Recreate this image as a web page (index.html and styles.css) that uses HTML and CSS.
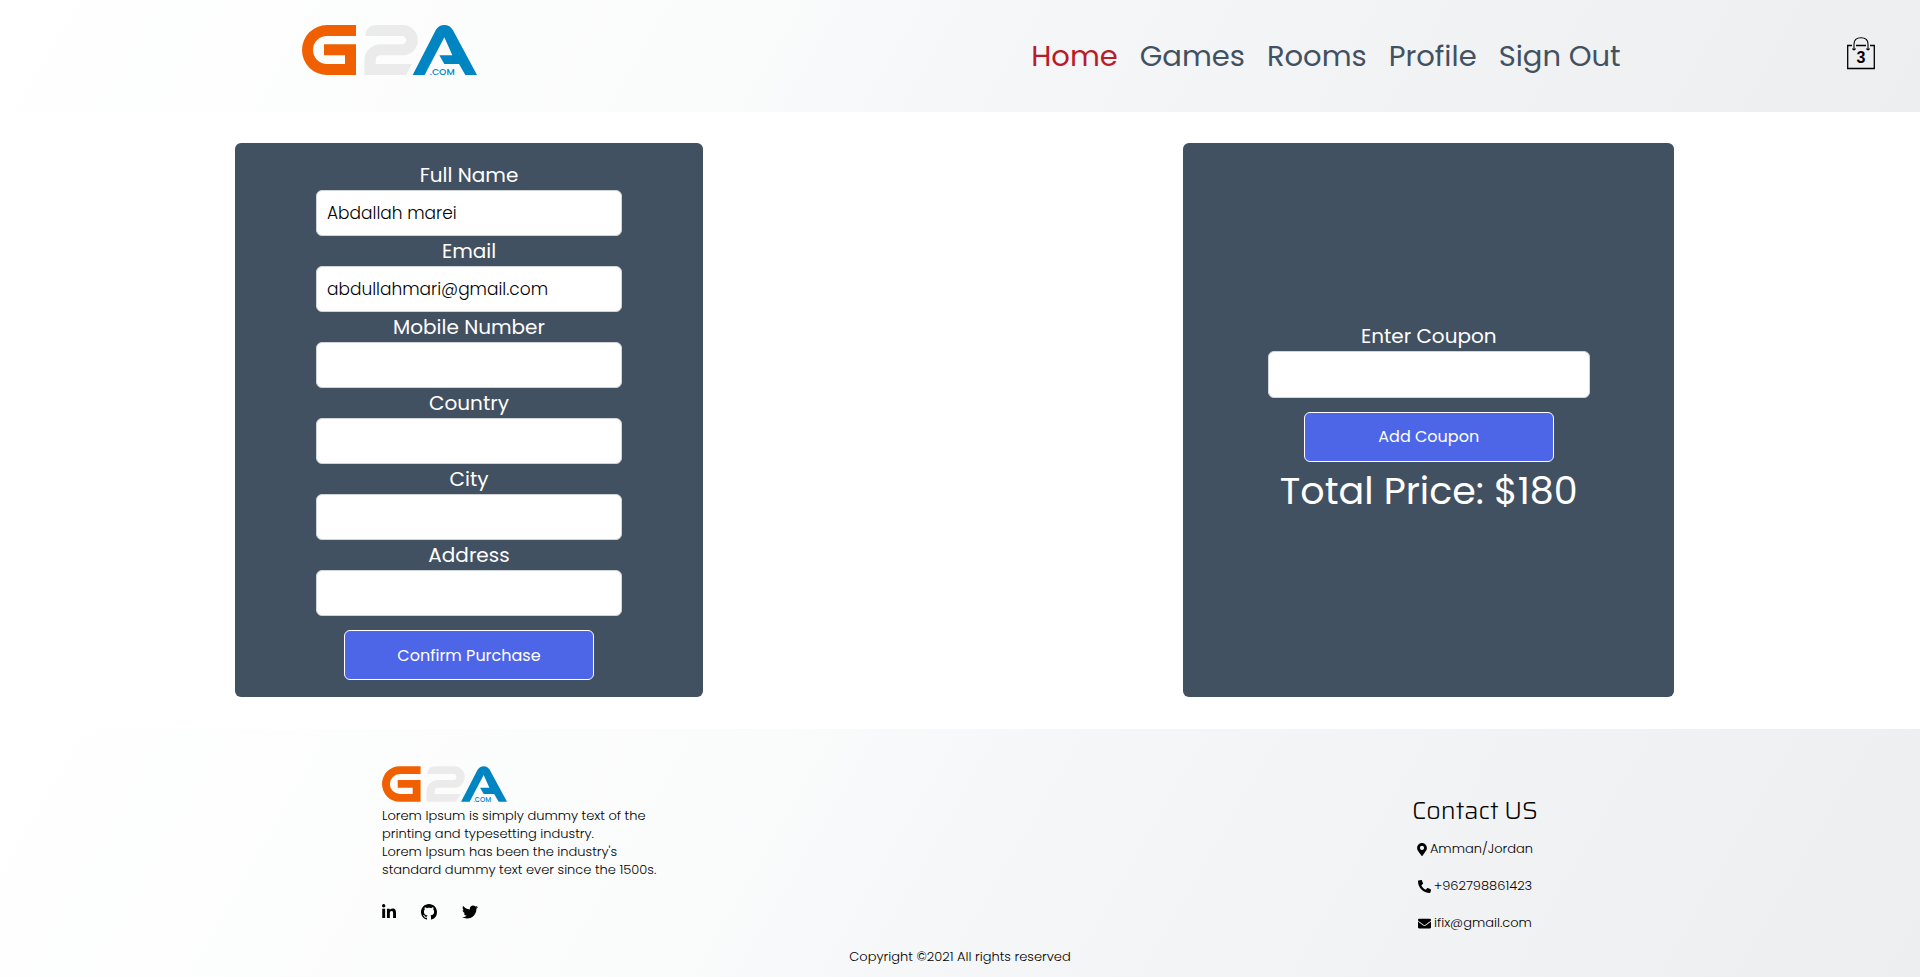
FILE: index.html
```html
<!DOCTYPE html>
<html lang="en">
<head>
<meta charset="utf-8">
<title>G2A Checkout</title>
<link rel="stylesheet" href="styles.css">
</head>
<body>
<header class="header">
  <a href="#" class="brand" aria-label="G2A.com">
    <svg class="logo" viewBox="0 0 525 150">
      <g id="logo">
        <path fill="#f16000" d="M162 0H75A75 75 0 0 0 75 150H162V58H66V91H129V117H75A42 42 0 0 1 75 33H162Z"/>
        <path fill="#ebebeb" d="M190 33Q192 0 225 0H302A45 45 0 0 1 302 91H236Q221 91 221 106V117H330L312 150H187V107A49 49 0 0 1 236 58H300A12 12 0 0 0 300 33Z"/>
        <path fill="#0085c3" d="M332 150L401 16Q410 0 427 0Q444 0 453 16L525 150H490L471 117H427L412 91H451L427 37L368 150Z"/>
        <text x="383" y="149" class="logo-text">.COM</text>
      </g>
    </svg>
  </a>
  <nav class="nav">
    <a href="#" class="active">Home</a>
    <a href="#">Games</a>
    <a href="#">Rooms</a>
    <a href="#">Profile</a>
    <a href="#">Sign Out</a>
  </nav>
  <a href="#" class="cart" aria-label="Cart">
    <svg viewBox="0 0 28 33" fill="none" stroke="#000">
      <path stroke-width="1.3" d="M5 8.500H.7V31.500H27.300V8.500H23M9 8.500H19"/>
      <path stroke-width="1.100" d="M7 12V7Q7 .8 14 .8T21 7V12"/>
      <path stroke-width="1.300" d="M5.500 11.500Q7 14 8.500 11.500M19.500 11.500Q21 14 22.500 11.500"/>
    </svg>
    <span class="count">3</span>
  </a>
</header>
<main class="main">
  <form class="card purchase">
    <label for="name">Full Name</label>
    <input id="name" type="text" value="Abdallah marei">
    <label for="email">Email</label>
    <input id="email" type="email" value="abdullahmari@gmail.com">
    <label for="mobile">Mobile Number</label>
    <input id="mobile" type="tel">
    <label for="country">Country</label>
    <input id="country" type="text">
    <label for="city">City</label>
    <input id="city" type="text">
    <label for="address">Address</label>
    <input id="address" type="text">
    <button type="button">Confirm Purchase</button>
  </form>
  <form class="card coupon">
    <label for="coupon">Enter Coupon</label>
    <input id="coupon" type="text">
    <button type="button">Add Coupon</button>
    <p class="total">Total Price: $180</p>
  </form>
</main>
<footer class="footer">
  <div class="columns">
    <section class="about">
      <svg class="logo small" viewBox="0 0 525 150"><use href="#logo"/></svg>
      <p>Lorem Ipsum is simply dummy text of the<br>printing and typesetting industry.<br>Lorem Ipsum has been the industry's<br>standard dummy text ever since the 1500s.</p>
      <div class="social">
        <a href="#" aria-label="LinkedIn"><svg class="linkedin" viewBox="0 0 448 512"><path d="M100.280 448H7.400V148.900h92.880zM53.790 108.100C24.090 108.100 0 83.500 0 53.800a53.790 53.790 0 0 1 107.580 0c0 29.700-24.100 54.300-53.790 54.300zM447.900 448h-92.680V302.400c0-34.700-.7-79.200-48.290-79.200-48.290 0-55.690 37.700-55.690 76.700V448h-92.780V148.900h89.080v40.800h1.300c12.400-23.500 42.690-48.300 87.880-48.300 94 0 111.280 61.900 111.280 142.300V448z"/></svg></a>
        <a href="#" aria-label="GitHub"><svg viewBox="0 0 16 16"><path d="M8 0C3.580 0 0 3.580 0 8c0 3.540 2.290 6.530 5.470 7.590.4.070.55-.17.55-.38 0-.19-.01-.82-.01-1.490-2.010.37-2.530-.49-2.690-.94-.09-.23-.48-.94-.82-1.130-.28-.15-.68-.52-.01-.53.63-.01 1.080.58 1.230.82.72 1.210 1.870.87 2.330.66.07-.52.28-.87.51-1.070-1.780-.2-3.640-.89-3.640-3.950 0-.87.31-1.590.82-2.150-.08-.2-.36-1.020.08-2.120 0 0 .67-.21 2.200.82.64-.18 1.320-.27 2-.27s1.360.09 2 .27c1.530-1.040 2.200-.82 2.200-.82.44 1.100.16 1.920.08 2.120.51.56.82 1.270.82 2.150 0 3.070-1.870 3.750-3.650 3.950.29.25.54.73.54 1.480 0 1.070-.01 1.930-.01 2.200 0 .21.15.46.55.38A8.010 8.010 0 0 0 16 8c0-4.420-3.580-8-8-8z"/></svg></a>
        <a href="#" aria-label="Twitter"><svg viewBox="0 0 512 512"><path d="M459.370 151.716c.325 4.548.325 9.097.325 13.645 0 138.720-105.583 298.558-298.558 298.558-59.452 0-114.680-17.219-161.137-47.106 8.447.974 16.568 1.299 25.340 1.299 49.055 0 94.213-16.568 130.274-44.832-46.132-.975-84.792-31.188-98.112-72.772 6.498.974 12.995 1.624 19.818 1.624 9.421 0 18.843-1.300 27.614-3.573-48.081-9.747-84.143-51.980-84.143-102.985v-1.299c13.969 7.797 30.214 12.670 47.431 13.319-28.264-18.843-46.781-51.005-46.781-87.391 0-19.492 5.197-37.360 14.294-52.954 51.655 63.675 129.300 105.258 216.365 109.807-1.624-7.797-2.599-15.918-2.599-24.040 0-57.828 46.782-104.934 104.934-104.934 30.213 0 57.502 12.670 76.670 33.137 23.715-4.548 46.456-13.320 66.599-25.340-7.798 24.366-24.366 44.833-46.132 57.827 21.117-2.273 41.584-8.122 60.426-16.243-14.292 20.791-32.161 39.308-52.628 54.253z"/></svg></a>
      </div>
    </section>
    <section class="contact">
      <h2>Contact US</h2>
      <p><svg class="pin" viewBox="0 0 384 512"><path d="M172.268 501.670C26.970 291.031 0 269.413 0 192 0 85.961 85.961 0 192 0s192 85.961 192 192c0 77.413-26.970 99.031-172.268 309.670-9.535 13.774-29.930 13.773-39.464 0zM192 272c44.183 0 80-35.817 80-80s-35.817-80-80-80-80 35.817-80 80 35.817 80 80 80z"/></svg>Amman/Jordan</p>
      <p><svg viewBox="0 0 512 512"><path d="M493.400 24.600l-104-24c-11.300-2.600-22.900 3.300-27.500 13.900l-48 112c-4.200 9.800-1.400 21.300 6.900 28l60.600 49.600c-36 76.700-98.900 140.500-177.200 177.200l-49.600-60.600c-6.800-8.300-18.200-11.100-28-6.900l-112 48C3.900 366.500-2 378.100.6 389.400l24 104C27.100 504.200 36.700 512 48 512c256.100 0 464-207.500 464-464 0-11.200-7.700-20.900-18.600-23.400z" transform="matrix(-1 0 0 1 512 0)"/></svg>+962798861423</p>
      <p><svg viewBox="0 0 512 512"><path d="M502.300 190.800c3.900-3.100 9.700-.2 9.700 4.700V400c0 26.500-21.500 48-48 48H48c-26.500 0-48-21.500-48-48V195.600c0-5 5.700-7.800 9.700-4.700 22.400 17.400 52.100 39.500 154.100 113.600 21.100 15.400 56.700 47.800 92.200 47.600 35.700.3 72-32.800 92.300-47.600 102-74.100 131.600-96.300 154-113.700zM256 320c23.200.4 56.600-29.200 73.400-41.400 132.700-96.300 142.800-104.700 173.400-128.700 5.800-4.500 9.200-11.500 9.200-18.900v-19c0-26.500-21.500-48-48-48H48c-26.500 0-48 21.500-48 48v19c0 7.400 3.400 14.300 9.200 18.900 30.600 23.900 40.700 32.400 173.400 128.700 16.800 12.200 50.200 41.800 73.400 41.400z"/></svg>ifix@gmail.com</p>
    </section>
  </div>
  <p class="copyright">Copyright ©2021 All rights reserved</p>
</footer>
</body>
</html>
```
FILE: styles.css
```css
* { box-sizing: border-box; }
body {
  margin: 0;
  background: #fff;
  color: #000;
  font-family: Poppins, Inter, "Open Sans", sans-serif;
  font-size: 16px;
}
a { color: inherit; text-decoration: none; }
p, h2 { margin: 0; }

.header, .footer {
  background: linear-gradient(120deg, #ffffff 0%, #fafbfb 38%, #f5f6f8 54%, #edeef0 100%);
}
.header {
  display: grid;
  grid-template-columns: 55% 1fr auto;
  align-items: start;
  height: 112px;
  padding-right: 45px;
}
.brand { margin: 25px 0 0 302px; width: 175px; }
.logo { display: block; width: 175px; height: 50px; overflow: visible; }
.logo.small { width: 125px; height: 36px; }
.logo-text { font: 500 28px Poppins, "DejaVu Sans", sans-serif; fill: #0085c3; }
.nav {
  display: flex;
  gap: 22px;
  padding-top: 36px;
  color: #425161;
  font-size: 29px;
  line-height: 40px;
  white-space: nowrap;
}
.nav .active { color: #b91c28; }
.cart { position: relative; margin-top: 37px; width: 28px; height: 33px; }
.cart svg { display: block; width: 28px; height: 33px; }
.count {
  position: absolute;
  inset: 11px 0 auto;
  text-align: center;
  color: #000;
  font: bold 16px/20px "Liberation Sans", Arial, sans-serif;
}

.main {
  display: flex;
  justify-content: space-between;
  padding: 31px 12.8% 32px 12.24%;
}
.card {
  display: flex;
  flex-direction: column;
  align-items: center;
  justify-content: center;
  min-height: 554px;
  padding: 16px 0;
  border-radius: 6px;
  background: #425161;
  color: #fff;
}
.purchase { width: 468px; }
.coupon { width: 491px; }
.card label { font-size: 20px; line-height: 30px; }
.card input {
  width: 306px;
  height: 46px;
  padding: 0 10px;
  border: 1px solid #ced4da;
  border-radius: 6px;
  background: #fff;
  color: #000;
  font: 300 17px Poppins, Inter, "Open Sans", sans-serif;
}
.coupon input { width: 322px; height: 47px; }
.card button {
  width: 250px;
  height: 50px;
  margin-top: 14px;
  border: 1px solid #fff;
  border-radius: 6px;
  background: #4d66e8;
  color: #fff;
  font: 400 16px Poppins, Inter, "Open Sans", sans-serif;
}
.total { font-size: 38px; line-height: 58px; }

.footer { padding: 37px 0 12px; font-size: 13px; font-weight: 300; line-height: 18px; }
.columns { display: flex; justify-content: space-between; padding: 0 19.9% 0 382px; }
.about p { margin-top: 5px; }
.social { display: flex; gap: 25px; margin-top: 25px; }
.social svg { display: block; width: 16px; height: 16px; fill: #000; }
.social .linkedin { width: 14px; }
.contact {
  display: flex;
  flex-direction: column;
  align-items: center;
  padding-top: 28px;
}
.contact h2 { margin-bottom: 12px; font: 300 25px/34px Saira, Roboto, sans-serif; }
.contact p { display: flex; align-items: center; gap: 3px; height: 18px; margin-bottom: 19px; }
.contact p:last-child { margin-bottom: 16px; }
.contact svg { width: 13px; height: 13px; fill: #000; }
.contact .pin { width: 10px; }
.copyright { text-align: center; }
```
